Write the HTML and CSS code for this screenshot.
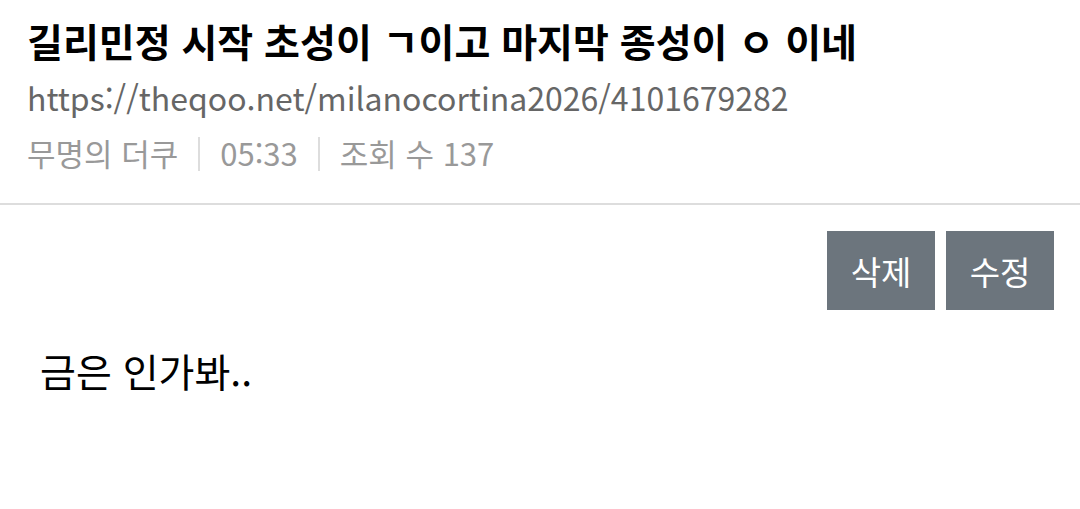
FILE: index.html
```html
<html lang="ko">
<head>
    <meta charset="UTF-8">
    <meta name="viewport" content="width=device-width, initial-scale=1.0">
    <title>theqoo</title>
    <link rel="stylesheet" href="styles.css">
</head>
<body>
    <div class="header">
        <h1 class="title">길리민정 시작 초성이 ㄱ이고 마지막 종성이 ㅇ 이네</h1>
        <div class="url">https://theqoo.net/milanocortina2026/4101679282</div>
        <div class="meta">
            <span>무명의 더쿠</span>
            <span class="sep"></span>
            <span>05:33</span>
            <span class="sep"></span>
            <span>조회 수 137</span>
        </div>
    </div>
    <div class="actions">
        <button type="button" class="btn">삭제</button>
        <button type="button" class="btn">수정</button>
    </div>
    <div class="content">금은 인가봐..</div>
</body>
</html>
```

FILE: styles.css
```css
body { margin: 0; background: #fff; font-family: "Noto Sans CJK KR", "Noto Sans", sans-serif; color: #000; }
.header { padding: 12px 27px 23px; border-bottom: 2px solid #ddd; }
.title { margin: 0; font-size: 39px; font-weight: bold; line-height: 56px; }
.url { font-size: 32px; color: #666; line-height: 58px; }
.meta { display: flex; align-items: center; font-size: 31px; color: #999; line-height: 54px; }
.sep { width: 2px; height: 34px; background: #ddd; margin: 2px 20px 0; }
.actions { display: flex; justify-content: flex-end; gap: 11px; padding: 26px 26px 0; }
.btn { background: #6c757d; color: #fff; border: none; border-radius: 0; font-family: inherit; font-size: 33px; width: 108px; height: 79px; padding: 0; }
.content { padding: 32px 40px; font-size: 39px; line-height: 56px; }
```
